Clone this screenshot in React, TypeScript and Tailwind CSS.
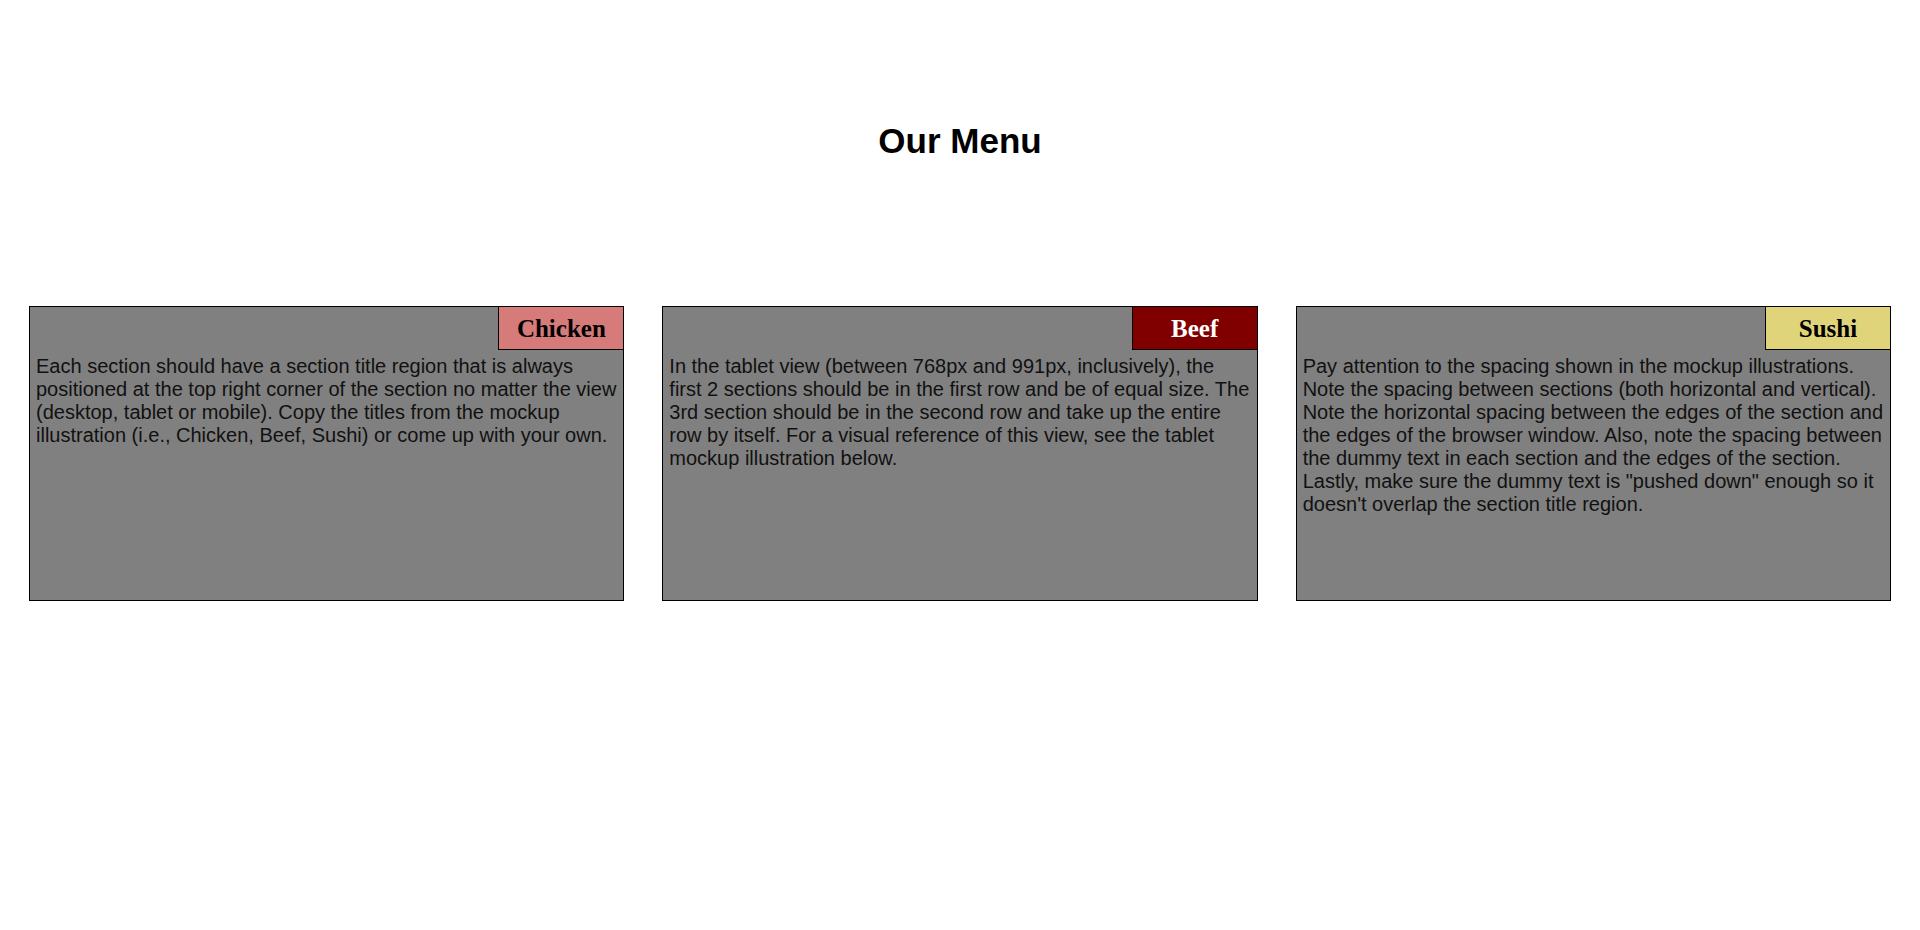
const sections = [
  {
    title: 'Chicken',
    labelClass: 'bg-[#d77a7a] text-black',
    text: 'Each section should have a section title region that is always positioned at the top right corner of the section no matter the view (desktop, tablet or mobile). Copy the titles from the mockup illustration (i.e., Chicken, Beef, Sushi) or come up with your own.',
  },
  {
    title: 'Beef',
    labelClass: 'bg-[#800000] text-white',
    text: 'In the tablet view (between 768px and 991px, inclusively), the first 2 sections should be in the first row and be of equal size. The 3rd section should be in the second row and take up the entire row by itself. For a visual reference of this view, see the tablet mockup illustration below.',
  },
  {
    title: 'Sushi',
    labelClass: 'bg-[#e0d47a] text-black',
    text: 'Pay attention to the spacing shown in the mockup illustrations. Note the spacing between sections (both horizontal and vertical). Note the horizontal spacing between the edges of the section and the edges of the browser window. Also, note the spacing between the dummy text in each section and the edges of the section. Lastly, make sure the dummy text is "pushed down" enough so it doesn\'t overlap the section title region.',
  },
]

export default function App() {
  return (
    <div className="min-h-[930px] bg-white font-['Liberation_Sans',Arial,sans-serif] text-black">
      <h1 className="pt-[121px] text-center text-[35px] font-bold leading-[40px]">Our Menu</h1>

      <div className="mt-[145px] grid grid-cols-3 gap-[38px] px-[29px]">
        {sections.map((s) => (
          <section
            key={s.title}
            className="relative h-[295px] border border-black bg-[#808080]"
          >
            <div
              className={`absolute -top-px -right-px flex h-[44px] w-[126px] items-center justify-center border border-black pt-px font-['Liberation_Serif','Times_New_Roman',serif] text-[25px] font-bold ${s.labelClass}`}
            >
              {s.title}
            </div>
            <p className="px-[6px] pt-[48px] text-[20px] leading-[23px] text-[#111]">{s.text}</p>
          </section>
        ))}
      </div>
    </div>
  )
}
